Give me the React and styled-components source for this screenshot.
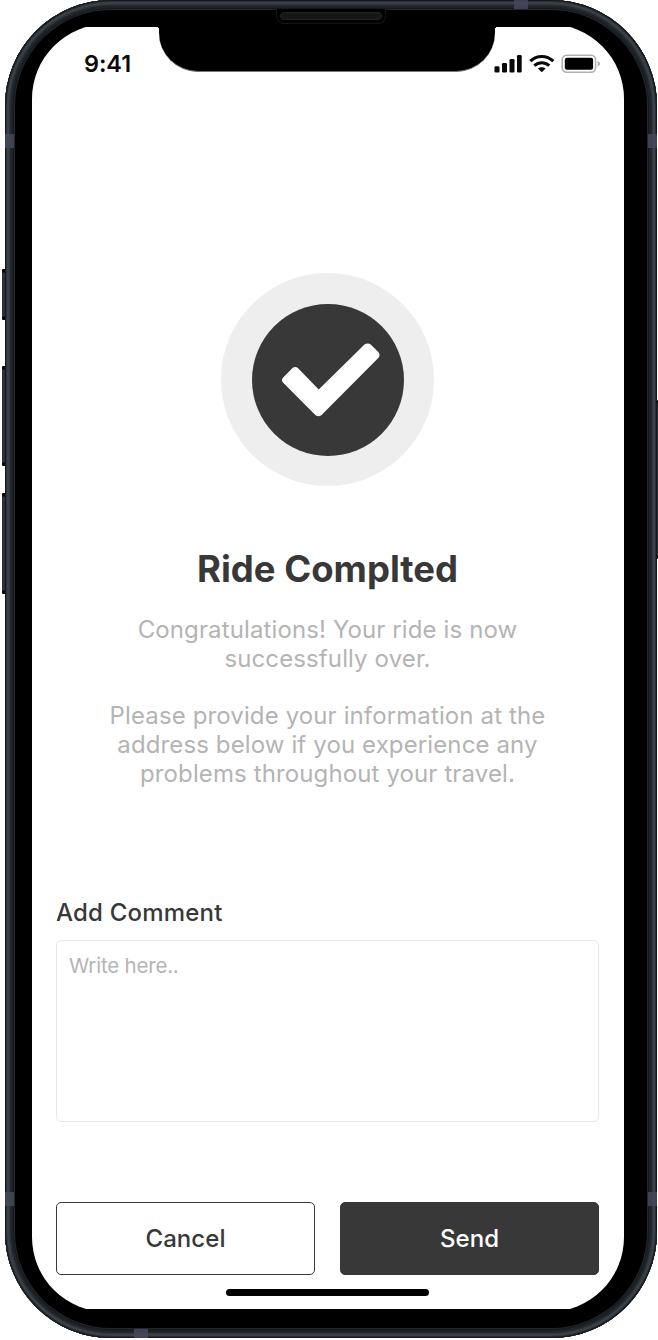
import React from 'react';
import styled, { createGlobalStyle } from 'styled-components';

const GlobalStyle = createGlobalStyle`
  *, *::before, *::after { box-sizing: border-box; }
  body { margin: 0; background: #fff; font-family: Inter, "Liberation Sans", sans-serif; }
`;

const Stage = styled.div`
  position: relative;
  width: 658px;
  height: 1340px;
  padding: 0 1px 2px 5px;
  overflow: hidden;
`;

const SideButton = styled.span`
  position: absolute;
  left: ${(p) => (p.$right ? '656px' : '2px')};
  top: ${(p) => p.$top}px;
  width: ${(p) => (p.$right ? 2 : 4)}px;
  height: ${(p) => p.$height}px;
  border-radius: ${(p) => (p.$right ? '0 1px 1px 0' : '1px 0 0 1px')};
  background: linear-gradient(#05070a 0 3px, #2b3138 4px calc(100% - 4px), #05070a calc(100% - 3px));
`;

const Frame = styled.div`
  position: relative;
  width: 652px;
  height: 1338px;
  padding: 24px 33px 26px 27px;
  border-radius: 106px;
  background: #000;
  box-shadow:
    inset 0 0 0 1px #14181c,
    inset 0 0 0 2px #2b3035,
    inset 0 0 0 4px #3b4147,
    inset 0 0 0 5px #30363c,
    inset 0 0 0 6px #262b31,
    inset 0 0 0 8px #1e2328,
    inset 0 0 0 9px #15191e,
    inset 0 0 0 10px #24272a;
`;

const Antenna = styled.span`
  position: absolute;
  left: ${(p) => p.$x}px;
  top: ${(p) => p.$y}px;
  width: ${(p) => (p.$flat ? 14 : 9)}px;
  height: ${(p) => (p.$flat ? 9 : 14)}px;
  background: rgba(73, 73, 94, 0.8);
`;

const Speaker = styled.span`
  position: absolute;
  left: 271px;
  top: 9px;
  width: 110px;
  height: 15px;
  padding: 3px 3px;
  border: 1px solid #151616;
  border-top: 0;
  border-radius: 0 0 8px 8px;
  background: #020202;

  &::before {
    content: '';
    display: block;
    height: 8px;
    border: 1px solid #222323;
    border-radius: 4px;
    background: #151616;
  }
`;

const ScreenMask = styled.div`
  display: flex;
  width: 592px;
  height: 1288px;
  padding: 3px 0;
  border-radius: 75px;
  overflow: hidden;
`;

const Screen = styled.main`
  position: relative;
  display: flex;
  flex-direction: column;
  flex: 1;
  padding: 0 25px 13px 24px;
  background: #fff;
`;

const Notch = styled.div`
  position: absolute;
  left: 127px;
  top: -1px;
  width: 336px;
  height: 46px;
  border-bottom: 1px solid #777;
  border-radius: 0 0 39px 39px;
  background: #000;

  &::before, &::after {
    content: '';
    position: absolute;
    top: 1px;
    width: 2px;
    height: 3px;
  }
  &::before { left: -2px; background: radial-gradient(ellipse at 0 100%, transparent 68%, #000 72%); }
  &::after { right: -2px; background: radial-gradient(ellipse at 100% 100%, transparent 68%, #000 72%); }
`;

const StatusBar = styled.header`
  display: flex;
  align-items: center;
  justify-content: space-between;
  height: 74px;
  padding: 0 0 0 28px;
`;

const Clock = styled.time`
  font-size: 23.5px;
  font-weight: 600;
  line-height: 28px;
  letter-spacing: -0.1px;
  color: #0b0b0b;
`;

const StatusIcons = styled.svg`
  display: block;
  width: 108px;
  height: 20px;
  margin-right: -2px;
`;

const Confirmation = styled.section`
  display: flex;
  flex-direction: column;
  align-items: center;
  padding-top: 172px;
  text-align: center;
`;

const Badge = styled.div`
  display: grid;
  place-items: center;
  width: 213px;
  height: 213px;
  border-radius: 50%;
  background: #eee;
`;

const BadgeCore = styled.div`
  width: 152px;
  height: 152px;
  border-radius: 50%;
  background: #383838;
`;

const Title = styled.h1`
  margin: 61px 0 0;
  font-size: 36.5px;
  font-weight: 700;
  line-height: 44px;
  color: #383838;
  white-space: nowrap;
`;

const Message = styled.p`
  margin: ${(p) => p.$gap}px 0 0;
  font-size: 24px;
  font-weight: 400;
  line-height: 29px;
  letter-spacing: 0.12px;
  color: #b4b4b4;
  white-space: nowrap;
`;

const Form = styled.form`
  display: flex;
  flex-direction: column;
  margin-top: 110px;
`;

const Label = styled.label`
  font-size: 24px;
  font-weight: 500;
  line-height: 29px;
  letter-spacing: 0.2px;
  color: #383838;
`;

const CommentBox = styled.textarea`
  display: block;
  width: 543px;
  height: 182px;
  margin: 13px 0 0;
  padding: 12px 12px;
  border: 1px solid #e7e7e7;
  border-radius: 5px;
  outline: 0;
  resize: none;
  font: 400 20.5px/26px Inter, "Liberation Sans", sans-serif;
  letter-spacing: -0.2px;
  color: #383838;
  background: #fff;

  &::placeholder { color: #b4b4b4; opacity: 1; }
`;

const Actions = styled.div`
  display: grid;
  grid-template-columns: 259px 259px;
  justify-content: space-between;
  margin-top: 80px;
`;

const Button = styled.button`
  height: 73px;
  padding: 0;
  border: 1px solid #383838;
  border-radius: 5px;
  font: 500 24px/29px Inter, "Liberation Sans", sans-serif;
  letter-spacing: 0.05px;
  color: ${(p) => (p.$primary ? '#fff' : '#383838')};
  background: ${(p) => (p.$primary ? '#383838' : '#fff')};
`;

const HomeIndicator = styled.div`
  align-self: center;
  width: 203px;
  height: 7px;
  margin-top: auto;
  border-radius: 4px;
  background: #000;
`;

const StatusGlyphs = () => (
  <StatusIcons viewBox="0 0 108 20" role="img" aria-label="Signal, Wi-Fi and battery">
    <g fill="#080808">
      <rect x="1.5" y="12.2" width="5" height="6.3" rx="1.2" />
      <rect x="9" y="9" width="5" height="9.5" rx="1.2" />
      <rect x="16.5" y="5" width="5" height="13.5" rx="1.2" />
      <rect x="24" y="1" width="4.7" height="17.5" rx="1.2" />
    </g>
    <g fill="none" stroke="#080808" strokeWidth="3.1">
      <path d="M37.3 7.2C43.8.9 53.8.9 60.3 7.2" />
      <path d="M41.3 11.7C45.6 7.7 52 7.7 56.3 11.7" />
    </g>
    <path d="M45 14.6C47.1 12.9 50.5 12.9 52.6 14.6L48.8 18.3Z" fill="#080808" />
    <rect x="69.2" y="1.2" width="33.4" height="17.1" rx="4.5" fill="none" stroke="#b0b0b0" strokeWidth="1.6" />
    <rect x="71.8" y="3.8" width="28.3" height="11.9" rx="2.2" fill="#000" />
    <path d="M104.7 7c3 1.2 3 4.3 0 5.5Z" fill="#aaa" />
  </StatusIcons>
);

const CheckMark = () => (
  <svg width="152" height="152" viewBox="0 0 152 152" aria-hidden="true">
    <path
      d="M31.2 73.4L40.8 63.8Q43.2 62.4 45.6 63.8L66.7 85.4L112.5 40.6Q115.8 38.2 118.7 40.6L126.5 48.3Q128.6 51 126.5 53.8L69.3 111.2Q66.4 113.4 63.6 111.2L31.2 78.8Q28.8 76.1 31.2 73.4Z"
      fill="#fff"
    />
  </svg>
);

export default function App() {
  return (
    <>
      <GlobalStyle />
      <Stage>
        <SideButton $top={269} $height={51} />
        <SideButton $top={366} $height={100} />
        <SideButton $top={493} $height={101} />
        <SideButton $right $top={400} $height={159} />
        <Frame>
          <Antenna $x={0} $y={134} />
          <Antenna $x={643} $y={134} />
          <Antenna $x={0} $y={1192} />
          <Antenna $x={643} $y={1192} />
          <Antenna $flat $x={509} $y={0} />
          <Antenna $flat $x={129} $y={1329} />
          <Speaker />
          <ScreenMask>
            <Screen>
              <Notch />
              <StatusBar>
                <Clock>9:41</Clock>
                <StatusGlyphs />
              </StatusBar>
              <Confirmation>
                <Badge>
                  <BadgeCore><CheckMark /></BadgeCore>
                </Badge>
                <Title>Ride Complted</Title>
                <Message $gap={24}>
                  Congratulations! Your ride is now<br />successfully over.
                </Message>
                <Message $gap={28}>
                  Please provide your information at the<br />
                  address below if you experience any<br />
                  problems throughout your travel.
                </Message>
              </Confirmation>
              <Form onSubmit={(e) => e.preventDefault()}>
                <Label htmlFor="comment">Add Comment</Label>
                <CommentBox id="comment" placeholder="Write here.." />
                <Actions>
                  <Button type="button">Cancel</Button>
                  <Button type="submit" $primary>Send</Button>
                </Actions>
              </Form>
              <HomeIndicator />
            </Screen>
          </ScreenMask>
        </Frame>
      </Stage>
    </>
  );
}
